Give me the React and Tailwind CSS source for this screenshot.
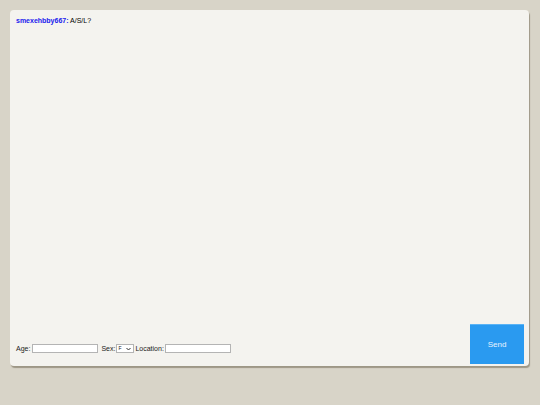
export default function App() {
  return (
    <div className="w-[540px] h-[405px] bg-[#d8d4c8] pt-[10px] pl-[10px] font-['Liberation_Sans',Arial,sans-serif]">
      <div className="w-[519px] h-[356px] bg-[#f4f3ef] rounded-[4px] shadow-[1px_2px_1px_rgba(110,100,80,0.55)] flex flex-col">
        <div className="flex-1 pl-[6px] pt-[6px] text-[7px] leading-[9px] text-black">
          <span className="font-bold text-[#2020ee]">smexehbby667:</span> A/S/L?
        </div>
        <div className="flex items-end justify-between pl-[6px] pr-[5px] pb-[2px]">
          <div className="flex items-center text-[7px] text-[#222] mb-[10px]">
            <span className="mr-[2px]">Age:</span>
            <input className="w-[66px] h-[9px] bg-white border border-[#b4b4b4] outline-none" />
            <span className="ml-[3px] mr-[1px]">Sex:</span>
            <div className="relative w-[18px] h-[9px] bg-white border border-[#b4b4b4] flex items-center">
              <select className="appearance-none w-full h-full bg-transparent text-[5px] leading-[7px] pl-[1px] outline-none">
                <option>F</option>
                <option>M</option>
              </select>
              <svg className="absolute right-[2px] top-[2px] pointer-events-none" width="5" height="4" viewBox="0 0 5 4">
                <path d="M0.5 1 L2.5 3 L4.5 1" fill="none" stroke="#333" strokeWidth="1" />
              </svg>
            </div>
            <span className="ml-[1px] mr-[1px]">Location:</span>
            <input className="w-[66px] h-[9px] bg-white border border-[#b4b4b4] outline-none" />
          </div>
          <button className="w-[54px] h-[40px] bg-[#2a9af0] border-t border-[#5ab3f5] text-[#e8f4ff] text-[8px]">
            Send
          </button>
        </div>
      </div>
    </div>
  );
}
